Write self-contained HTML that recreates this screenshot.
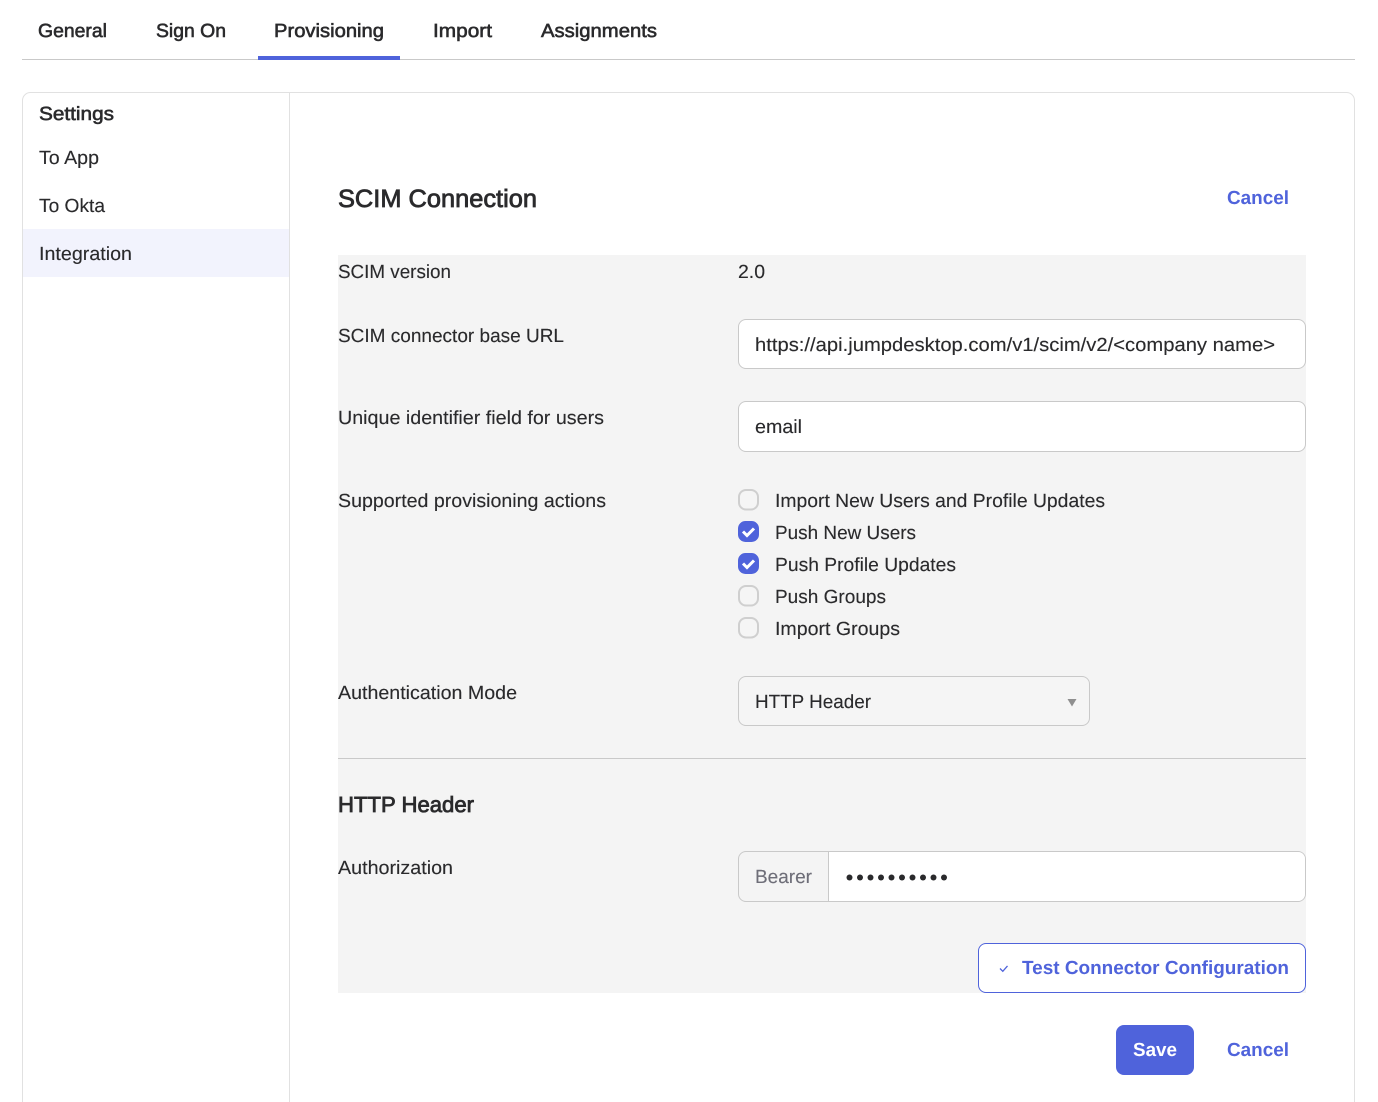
<!DOCTYPE html>
<html lang="en"><head><meta charset="utf-8"><title>SCIM Connection</title>
<style>
html,body{margin:0;padding:0;background:#fff;width:1378px;height:1102px;overflow:hidden}
svg{display:block}
text{font-family:"Liberation Sans",Arial,sans-serif;font-size:19px;fill:#2a2a2c;stroke:#2a2a2c;stroke-width:.12px;text-rendering:geometricPrecision}
.m{stroke:#2a2a2c;stroke-width:.6px}
.b{font-weight:700;fill:#4f63db;stroke:none}
.h{stroke:#2a2a2c;stroke-width:.8px}
</style></head><body>
<svg width="1378" height="1102" viewBox="0 0 1378 1102" xmlns="http://www.w3.org/2000/svg">
<rect x="22" y="59" width="1333" height="1" fill="#c9c9c9"/>
<rect x="258" y="56" width="142" height="4" fill="#4f63db"/>
<text class="m" x="38" y="37" textLength="69" lengthAdjust="spacingAndGlyphs">General</text>
<text class="m" x="156" y="37" textLength="70" lengthAdjust="spacingAndGlyphs">Sign On</text>
<text class="m" x="274" y="37" textLength="110" lengthAdjust="spacingAndGlyphs">Provisioning</text>
<text class="m" x="433" y="37" textLength="59" lengthAdjust="spacingAndGlyphs">Import</text>
<text class="m" x="541" y="37" textLength="116" lengthAdjust="spacingAndGlyphs">Assignments</text>

<path d="M22.5 1103V100.500a8 8 0 0 1 8-8h1316a8 8 0 0 1 8 8v1002.500" fill="none" stroke="#e1e1e1"/>
<rect x="289" y="93" width="1" height="1010" fill="#e1e1e1"/>
<rect x="23" y="229" width="266" height="48" fill="#f2f3fd"/>
<text class="m" x="39" y="120" textLength="75" lengthAdjust="spacingAndGlyphs">Settings</text>
<text x="39" y="164" textLength="60" lengthAdjust="spacingAndGlyphs">To App</text>
<text x="39" y="212" textLength="66" lengthAdjust="spacingAndGlyphs">To Okta</text>
<text x="39" y="260" textLength="93" lengthAdjust="spacingAndGlyphs">Integration</text>

<text class="h" x="338" y="207" textLength="199" lengthAdjust="spacingAndGlyphs" style="font-size:25px">SCIM Connection</text>
<text class="b" x="1227" y="204" textLength="62" lengthAdjust="spacingAndGlyphs">Cancel</text>

<rect x="338" y="255" width="968" height="738" fill="#f4f4f4"/>
<text x="338" y="278" textLength="113" lengthAdjust="spacingAndGlyphs">SCIM version</text>
<text x="738" y="278" textLength="27" lengthAdjust="spacingAndGlyphs">2.0</text>

<text x="338" y="342" textLength="226" lengthAdjust="spacingAndGlyphs">SCIM connector base URL</text>
<rect x="738.5" y="319.5" width="567" height="49" rx="7.5" fill="#fff" stroke="#c9c9c9"/>
<text x="755" y="351" textLength="520" lengthAdjust="spacingAndGlyphs">https://api.jumpdesktop.com/v1/scim/v2/&lt;company name&gt;</text>

<text x="338" y="424" textLength="266" lengthAdjust="spacingAndGlyphs">Unique identifier field for users</text>
<rect x="738.5" y="401.5" width="567" height="50" rx="7.5" fill="#fff" stroke="#c9c9c9"/>
<text x="755" y="433" textLength="47" lengthAdjust="spacingAndGlyphs">email</text>

<text x="338" y="507" textLength="268" lengthAdjust="spacingAndGlyphs">Supported provisioning actions</text>
<rect x="739" y="490" width="19" height="19.500" rx="7" fill="#f5f5f5" stroke="#cfcfcf" stroke-width="2"/>
<rect x="738" y="521" width="21" height="21" rx="7.500" fill="#4f63db"/>
<path d="M743 531.500l4 4 7-7" fill="none" stroke="#fff" stroke-width="3"/>
<rect x="738" y="553" width="21" height="21" rx="7.500" fill="#4f63db"/>
<path d="M743 563.500l4 4 7-7" fill="none" stroke="#fff" stroke-width="3"/>
<rect x="739" y="586" width="19" height="19.500" rx="7" fill="#f5f5f5" stroke="#cfcfcf" stroke-width="2"/>
<rect x="739" y="618" width="19" height="19.500" rx="7" fill="#f5f5f5" stroke="#cfcfcf" stroke-width="2"/>
<text x="775" y="507" textLength="330" lengthAdjust="spacingAndGlyphs">Import New Users and Profile Updates</text>
<text x="775" y="539" textLength="141" lengthAdjust="spacingAndGlyphs">Push New Users</text>
<text x="775" y="571" textLength="181" lengthAdjust="spacingAndGlyphs">Push Profile Updates</text>
<text x="775" y="603" textLength="111" lengthAdjust="spacingAndGlyphs">Push Groups</text>
<text x="775" y="635" textLength="125" lengthAdjust="spacingAndGlyphs">Import Groups</text>

<text x="338" y="699" textLength="179" lengthAdjust="spacingAndGlyphs">Authentication Mode</text>
<rect x="738.5" y="676.5" width="351" height="49" rx="7.5" fill="#f5f5f5" stroke="#c9c9c9"/>
<text x="755" y="708" textLength="116" lengthAdjust="spacingAndGlyphs">HTTP Header</text>
<path d="M1067.500 699h9l-4.500 7.500z" fill="#8f8f8f"/>

<rect x="338" y="758" width="968" height="1" fill="#c9c9c9"/>
<text class="h" x="338" y="812" textLength="136" lengthAdjust="spacingAndGlyphs" style="font-size:22px">HTTP Header</text>

<text x="338" y="874" textLength="115" lengthAdjust="spacingAndGlyphs">Authorization</text>
<path d="M828.500 851.500h-82.500a7.500 7.500 0 0 0-7.500 7.500v35a7.500 7.500 0 0 0 7.500 7.500h82.500z" fill="#f4f4f4"/>
<rect x="738.500" y="851.500" width="567" height="50" rx="7.500" fill="none" stroke="#c9c9c9"/>
<path d="M829 852h469a7 7 0 0 1 7 7v35a7 7 0 0 1-7 7h-469z" fill="#fff"/>
<rect x="828" y="852" width="1" height="50" fill="#c9c9c9"/>
<text x="755" y="883" textLength="57" lengthAdjust="spacingAndGlyphs" style="fill:#6e6e78;stroke:#6e6e78">Bearer</text>
<g fill="#2a2a2c">
<circle cx="849.500" cy="877.500" r="3"/><circle cx="860" cy="877.500" r="3"/><circle cx="870.500" cy="877.500" r="3"/><circle cx="881" cy="877.500" r="3"/><circle cx="891.500" cy="877.500" r="3"/><circle cx="902" cy="877.500" r="3"/><circle cx="912.500" cy="877.500" r="3"/><circle cx="923" cy="877.500" r="3"/><circle cx="933.500" cy="877.500" r="3"/><circle cx="944" cy="877.500" r="3"/>
</g>

<rect x="978.500" y="943.500" width="327" height="49" rx="7.500" fill="#fff" stroke="#4f63db"/>
<path d="M1000 968.500l2.800 2.800 4.700-5.400" fill="none" stroke="#4f63db" stroke-width="1.300"/>
<text class="b" x="1022" y="974" textLength="267" lengthAdjust="spacingAndGlyphs">Test Connector Configuration</text>

<rect x="1116" y="1025" width="78" height="50" rx="8" fill="#4f63db"/>
<text class="b" x="1133" y="1056" textLength="44" lengthAdjust="spacingAndGlyphs" style="fill:#fff">Save</text>
<text class="b" x="1227" y="1056" textLength="62" lengthAdjust="spacingAndGlyphs">Cancel</text>
</svg>
</body></html>
